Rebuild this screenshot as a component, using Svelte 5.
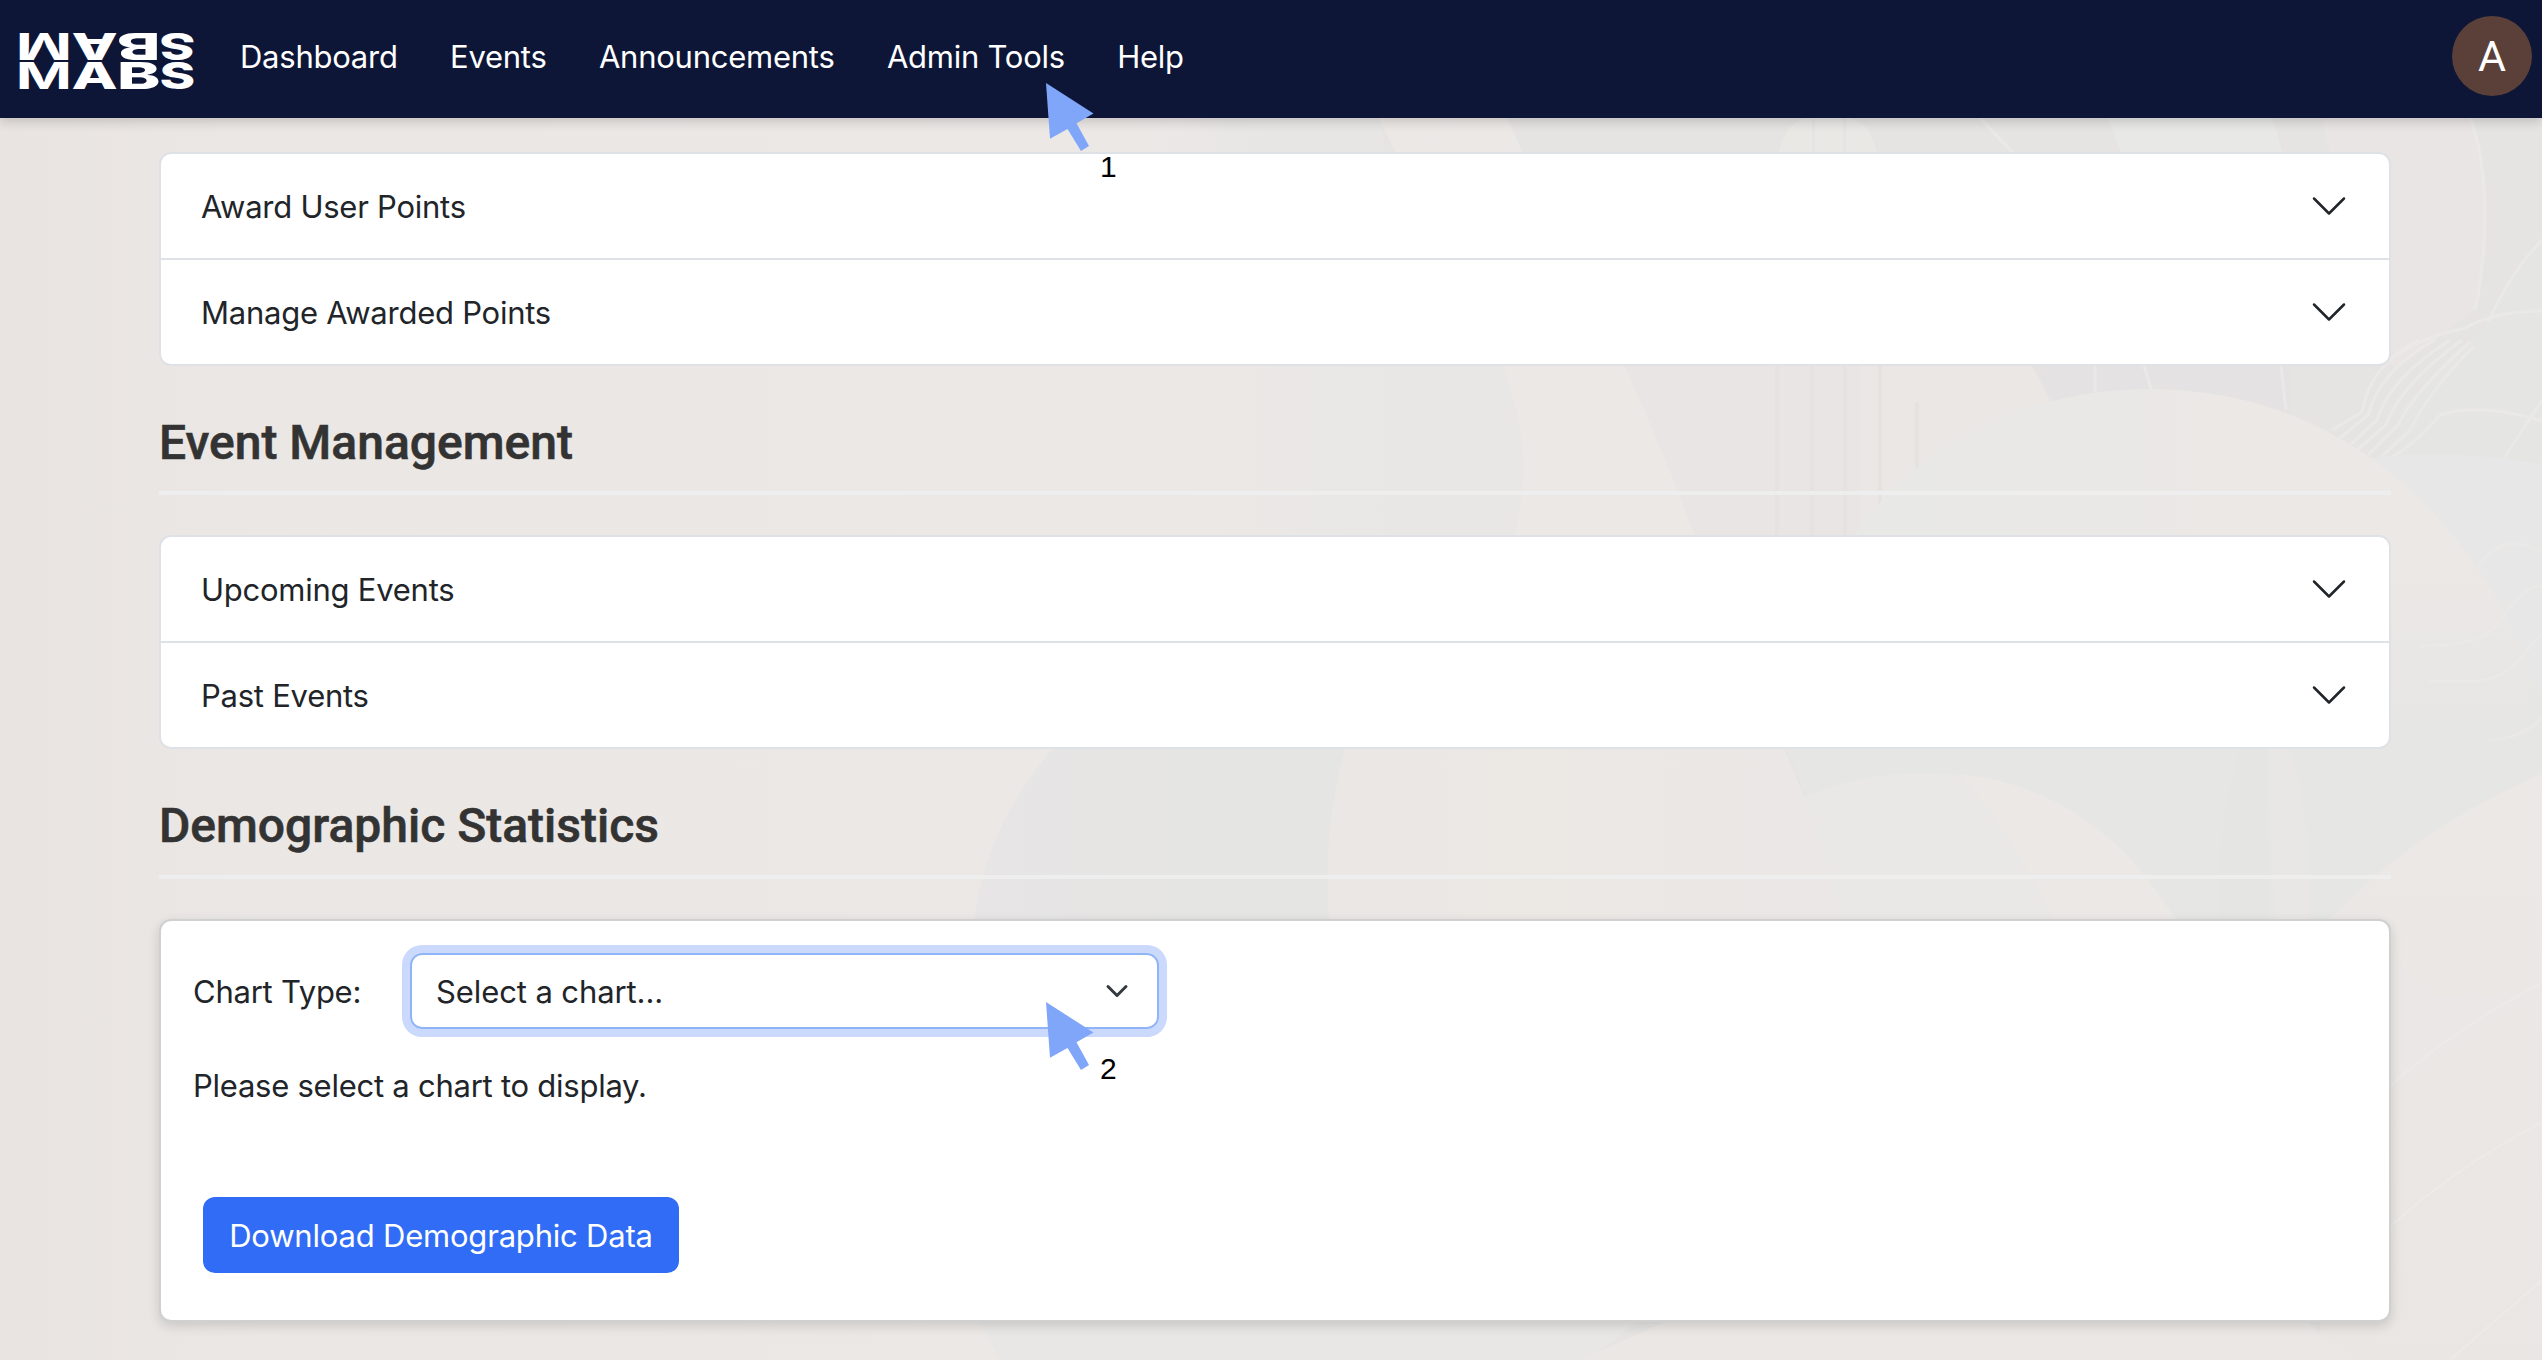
<script>
  const navLinks = ['Dashboard', 'Events', 'Announcements', 'Admin Tools', 'Help'];
  const pointItems = ['Award User Points', 'Manage Awarded Points'];
  const eventItems = ['Upcoming Events', 'Past Events'];
  // Each logo letter is drawn upright and again turned 180° above it.
  const logo = [
    { ch: 'M', x: 15.7, w: 56.2 },
    { ch: 'A', x: 71.6, w: 46.2 },
    { ch: 'B', x: 116.9, w: 43.5 },
    { ch: 'S', x: 159.6, w: 35.7 }
  ];
</script>

{#snippet accordion(items)}
  <div class="accordion">
    {#each items as item}
      <button class="row">
        <span>{item}</span>
        <svg class="chevron" viewBox="0 0 16 16"><path d="m2 5 6 6 6-6" /></svg>
      </button>
    {/each}
  </div>
{/snippet}

{#snippet pointer(label, cls)}
  <div class="pointer {cls}">
    <svg viewBox="0 0 48 70"><path d="M0 1 47.5 31.5 30.5 41.3 43 64 35 69 21.5 47 4 56.7Z" /></svg>
    <span>{label}</span>
  </div>
{/snippet}

<div class="page">
  <svg class="backdrop" viewBox="0 0 2542 1360" preserveAspectRatio="none">
    <defs>
      <linearGradient id="base"><stop offset="0" stop-color="#e9e4e1" /><stop offset=".1" stop-color="#ebe7e4" /><stop offset=".45" stop-color="#ece8e6" /><stop offset=".5" stop-color="#e7e6e5" /></linearGradient>
      <linearGradient id="disc"><stop offset="0" stop-color="#ece8e6" /><stop offset=".45" stop-color="#ece8e6" /><stop offset=".8" stop-color="#e8e7e5" /></linearGradient>
      <linearGradient id="hump"><stop offset="0" stop-color="#e8e8e6" /><stop offset=".35" stop-color="#e9e8e6" /><stop offset=".6" stop-color="#ece8e6" /></linearGradient>
      <linearGradient id="humpFade" x1="0" y1="0" x2="0" y2="1"><stop offset=".25" stop-color="#e6e6e4" stop-opacity="0" /><stop offset=".57" stop-color="#e6e6e4" /></linearGradient>
      <linearGradient id="slate"><stop offset="0" stop-color="#e7e5e6" /><stop offset=".6" stop-color="#e5e5e3" /></linearGradient>
      <linearGradient id="cream"><stop offset="0" stop-color="#ebe7e5" /><stop offset=".4" stop-color="#ece8e4" /><stop offset="1" stop-color="#ebe7e6" /></linearGradient>
      <linearGradient id="hill" x1="0" y1="0" x2="0" y2="1"><stop offset="0" stop-color="#ece8e6" /><stop offset="1" stop-color="#e9e6e4" /></linearGradient>
    </defs>
    <rect width="2542" height="1360" fill="url(#base)" />
    <path d="M1380 100H2542V1360H1500Z" fill="#e5e4e3" />
    <path d="M1370 100H1500L1521 150 1625 366Q1672 470 1700 550L1500 560V366Z" fill="#ece8e5" />
    <path d="M900 250H1440C1480 310 1524 390 1524 470C1522 510 1514 540 1505 570H900Z" fill="url(#disc)" />
    <path d="M1625 366H2032L2060 420 1850 550H1700Q1672 470 1625 366Z" fill="#e9e5e4" />
    <path d="M1860 366H2032L2060 420 1940 460 1860 550Z" fill="#ebe7e5" />
    <path d="M2032 366H2290V440L2060 410Z" fill="#e4e2e3" />
    <path class="column" d="M1777 366V540M1812 366V540M1845 366V540M1880 366V540M1917 402V540" />
    <path d="M1815 110H1843V155H1815ZM1778 155Q1785 118 1812 118V155ZM1846 155V118Q1872 120 1877 155Z" fill="#e9e8e5" />
    <path d="M2105 110H2270L2345 366H2200Z" fill="#e8e8e6" />
    <path d="M2320 110H2470C2492 170 2488 250 2475 310L2400 366H2380Z" fill="#e9e5e4" />
    <path d="M2542 240Q2510 275 2488 325L2400 410V470H2542Z" fill="#e5e5e3" />
    <path class="wave" d="M2470 118C2490 170 2488 250 2475 310M2542 240Q2512 270 2488 322M1980 118 2018 158M1445 118Q1435 140 1434 155M1505 118 1522 155M2095 366V392M2144 366 2152 392M2281 366 2286 410M2542 400 2504 458" />
    <path class="wave" d="M2542 311Q2495 311 2465 328Q2410 340 2385 365M2542 421Q2480 402 2440 415Q2405 455 2380 462M2418 340Q2370 365 2362 412L2332 430M2435 340Q2380 370 2368 415L2340 438M2450 340Q2390 378 2377 420L2350 445M2462 340Q2400 385 2386 425L2357 450M2470 342Q2415 390 2398 425L2368 455M2474 346Q2430 390 2410 430L2378 460" />
    <path d="M2370 458Q2450 448 2542 464V700H2450Z" fill="#e7e7e7" />
    <path d="M1850 540C1920 440 2030 389 2150 389C2350 389 2480 530 2530 675V760H1850Z" fill="url(#hump)" />
    <path d="M1850 540C1920 440 2030 389 2150 389C2350 389 2480 530 2530 675L2542 690V1000H1850Z" fill="url(#humpFade)" />
    <path class="wave" d="M2542 552Q2500 530 2478 568M2542 586C2520 586 2512 610 2490 632Q2470 646 2420 646M2542 634C2520 655 2515 675 2480 681H2430M2542 718Q2520 742 2470 742" />
    <path d="M1060 740H1360V930H974Q980 830 1060 740Z" fill="url(#slate)" />
    <path d="M1348 740H1780Q1822 830 1842 930H1330Q1320 830 1348 740Z" fill="url(#cream)" />
    <path d="M1782 740H2542V930H1842Q1824 830 1782 740Z" fill="#e6e6e4" />
    <path d="M1803 798C1910 750 2080 760 2182 930H1842Q1828 860 1803 798Z" fill="#e9e8e6" />
    <path d="M1960 774C2060 785 2130 840 2182 930H2060Q2010 830 1960 774Z" fill="#ebe8e6" />
    <path d="M2267 740H2288Q2312 820 2310 925H2275Z" fill="#e9e7e5" />
    <path d="M2241 748Q2215 830 2218 920H2268V748Z" fill="#e5e5e3" />
    <path d="M2320 930Q2410 830 2542 774V1360H2320Z" fill="url(#hill)" />
    <path d="M2350 960H2400Q2420 1020 2542 985L2380 1095H2350Z" fill="#e9e8e6" opacity=".6" />
    <path d="M2380 1095Q2450 1030 2542 983M2380 1236Q2450 1170 2542 1122M2450 1360 2542 1280" fill="none" stroke="#edeae7" stroke-width="2" />
    <path d="M974 1310H1650L1590 1360H1000Z" fill="#e8e7e5" />
    <path d="M1580 1360 1680 1315H2300L2350 1360Z" fill="#ebe7e5" />
  </svg>

  <header class="navbar">
    <svg class="logo" viewBox="0 0 200 118">
      {#each logo as l}
        <g class:medium={l.ch === 'M'}>
          <text x={l.x} y="88.6" textLength={l.w} lengthAdjust="spacingAndGlyphs">{l.ch}</text>
          <text x={l.x} y="88.6" textLength={l.w} lengthAdjust="spacingAndGlyphs" transform="rotate(180 {l.x + l.w / 2} 60.9)">{l.ch}</text>
        </g>
      {/each}
    </svg>
    <nav>
      {#each navLinks as link}<a href="#top">{link}</a>{/each}
    </nav>
    <div class="avatar">A</div>
  </header>

  <main>
    {@render accordion(pointItems)}
    <h2>Event Management</h2>
    {@render accordion(eventItems)}
    <h2 class="tall">Demographic Statistics</h2>
    <section class="card">
      <div class="field">
        <span class="label">Chart Type:</span>
        <div class="select">
          <span>Select a chart...</span>
          <svg viewBox="0 0 16 16"><path d="m2 5 6 6 6-6" /></svg>
        </div>
      </div>
      <p>Please select a chart to display.</p>
      <button class="download">Download Demographic Data</button>
    </section>
  </main>

  {@render pointer('1', 'first')}
  {@render pointer('2', 'second')}
</div>

<style>
  :global(body) { margin: 0; }
  .page {
    position: relative;
    width: 2542px;
    height: 1360px;
    overflow: hidden;
    font-family: Inter, 'Liberation Sans', sans-serif;
    font-size: 31px;
    line-height: 48px;
    letter-spacing: -.25px;
    color: #212529;
    background: #ebe7e5;
  }
  .backdrop { position: absolute; inset: 0; width: 100%; height: 100%; }
  .column { fill: none; stroke: #e5e2e0; stroke-width: 4; }
  .wave { fill: none; stroke: #ebe9e7; stroke-width: 3; }
  .navbar {
    position: relative;
    display: flex;
    height: 118px;
    background: #0d1637;
    box-shadow: 0 4px 10px rgba(0, 0, 0, .16);
  }
  .logo {
    flex: none;
    width: 200px;
    height: 118px;
    font: 800 37.5px Inter, sans-serif;
    letter-spacing: 0;
    fill: #fff;
  }
  .medium { font-weight: 700; }
  nav { display: flex; gap: 52.4px; padding: 33px 0 0 40px; }
  nav a { color: #fff; text-decoration: none; }
  .avatar {
    width: 80px;
    height: 80px;
    margin: 16px 10px 0 auto;
    border-radius: 50%;
    background: #5a4038;
    color: #fff;
    font: 43px/81px Roboto, sans-serif;
    text-align: center;
  }
  main { position: relative; width: 2232px; margin: 34px 0 0 159px; }
  .accordion {
    box-sizing: border-box;
    height: 214px;
    border: 2px solid #dee2e6;
    border-radius: 12px;
    background: #fff;
    overflow: hidden;
  }
  .row {
    box-sizing: border-box;
    display: flex;
    align-items: center;
    justify-content: space-between;
    width: 100%;
    height: 104px;
    padding: 0 40px;
    border: 0;
    background: none;
    color: inherit;
    font: inherit;
    letter-spacing: inherit;
    text-align: left;
  }
  .row + .row { height: 106px; border-top: 2px solid #dee2e6; }
  .row span { padding-top: 2px; }
  .chevron {
    width: 40px;
    height: 40px;
    fill: none;
    stroke: #212529;
    stroke-linecap: round;
    stroke-linejoin: round;
  }
  h2 {
    box-sizing: border-box;
    height: 129px;
    margin: 0 0 40px;
    padding-top: 48px;
    border-bottom: 4px solid #eee;
    color: #333;
    font: 500 48px/58px Roboto, sans-serif;
    letter-spacing: 0;
    -webkit-text-stroke: .6px #333;
  }
  .tall { height: 130px; }
  .card {
    box-sizing: border-box;
    height: 403px;
    padding: 32px;
    border: 2px solid #d0d0d0;
    border-radius: 12px;
    background: #fff;
    box-shadow: 0 4px 12px rgba(0, 0, 0, .14);
  }
  .field { display: flex; align-items: center; height: 76px; }
  .label { flex: none; width: 217px; padding-top: 1px; }
  .select {
    box-sizing: border-box;
    display: flex;
    flex: none;
    align-items: center;
    justify-content: space-between;
    width: 749px;
    height: 76px;
    padding: 0 28px 0 24px;
    border: 2px solid #8fb4f8;
    border-radius: 12px;
    box-shadow: 0 0 0 8px #cbd9fc;
  }
  .select span { padding-top: 1px; letter-spacing: -.1px; }
  .select svg {
    width: 24px;
    height: 24px;
    fill: none;
    stroke: #343a40;
    stroke-width: 2;
    stroke-linecap: round;
    stroke-linejoin: round;
  }
  p { margin: 33px 0 0; }
  .download {
    display: block;
    width: 476px;
    height: 76px;
    margin: 87px 0 0 10px;
    padding: 1px 0 0;
    border: 0;
    border-radius: 12px;
    background: #306cf6;
    color: #fff;
    font: inherit;
    letter-spacing: -.2px;
  }
  .pointer {
    position: absolute;
    left: 1046px;
    color: #000;
    font: 30px/30px 'Liberation Sans', Arial, sans-serif;
  }
  .pointer svg { display: block; width: 48px; height: 70px; fill: #80a6fa; }
  .pointer span { position: absolute; left: 54px; }
  .first { top: 82px; }
  .first span { top: 70px; }
  .second { top: 1001px; }
  .second span { top: 53px; }
</style>
